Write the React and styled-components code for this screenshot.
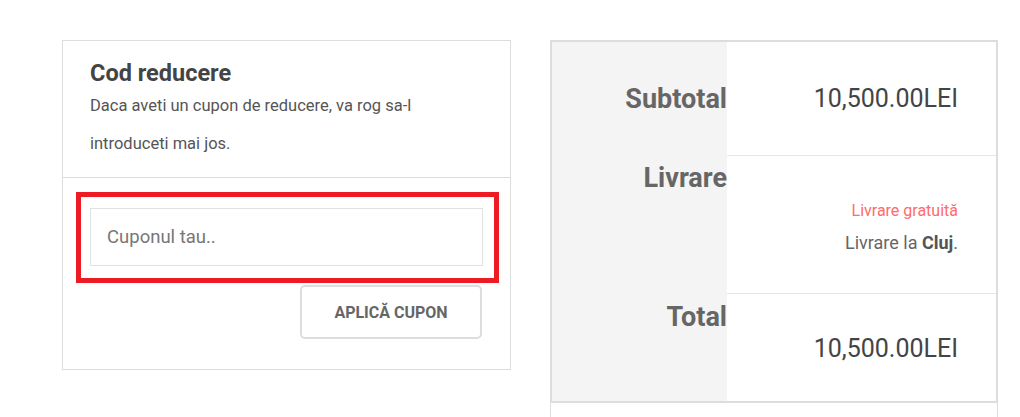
import React, { useState } from "react";
import styled, { createGlobalStyle } from "styled-components";

const GlobalStyle = createGlobalStyle`
  body {
    margin: 0;
    background: #fff;
    font-family: Roboto, "Liberation Sans", Arial, sans-serif;
  }
`;

const App = () => {
  const [coupon, setCoupon] = useState("");

  return (
    <Page>
      <GlobalStyle />
      <CouponCard>
        <CardHeader>
          <Title>Cod reducere</Title>
          <Intro>
            Daca aveti un cupon de reducere, va rog sa-l introduceti mai jos.
          </Intro>
        </CardHeader>
        <CardBody>
          <InputWrap>
            <CouponInput
              placeholder="Cuponul tau.."
              value={coupon}
              onChange={(e) => setCoupon(e.target.value)}
            />
            {/* marcaj rosu peste camp */}
            <Highlight />
          </InputWrap>
          <ApplyButton>APLICĂ CUPON</ApplyButton>
        </CardBody>
      </CouponCard>

      <TotalsColumn>
        <TotalsTable>
          <Row height={113}>
            <Label center>Subtotal</Label>
            <Value center>
              <Amount>10,500.00LEI</Amount>
            </Value>
          </Row>
          <Row height={138}>
            <Label pad={7}>Livrare</Label>
            <Value divider pad={43}>
              <FreeShipping>Livrare gratuită</FreeShipping>
              <ShippingTo>
                Livrare la <strong>Cluj</strong>.
              </ShippingTo>
            </Value>
          </Row>
          <Row height={108}>
            <Label pad={8}>Total</Label>
            <Value divider pad={40}>
              <Amount>10,500.00LEI</Amount>
            </Value>
          </Row>
        </TotalsTable>
        <NextBlock />
      </TotalsColumn>
    </Page>
  );
};

const Page = styled.div`
  display: flex;
  align-items: flex-start;
  gap: 39px;
  padding: 40px 0 0 62px;
  height: 417px;
  box-sizing: border-box;
  overflow: hidden;
`;

const CouponCard = styled.div`
  width: 449px;
  box-sizing: border-box;
  border: 1px solid #dddddd;
  background: #fff;
`;

const CardHeader = styled.div`
  padding: 18px 27px 14px 27px;
  border-bottom: 1px solid #dddddd;
`;

const Title = styled.h3`
  margin: 0;
  font-size: 23.5px;
  line-height: 28px;
  font-weight: 700;
  color: #444;
`;

const Intro = styled.p`
  margin: 0;
  font-size: 16.5px;
  line-height: 38px;
  color: #555;
`;

const CardBody = styled.div`
  display: flex;
  flex-direction: column;
  align-items: flex-end;
  gap: 19px;
  padding: 30px 27px 30px 27px;
`;

const InputWrap = styled.div`
  position: relative;
  width: 100%;
`;

const CouponInput = styled.input`
  display: block;
  width: 100%;
  height: 58px;
  box-sizing: border-box;
  border: 1px solid #e1e1e1;
  padding: 0 16px;
  font-family: inherit;
  font-size: 18.5px;
  color: #444;
  outline: none;

  &::placeholder {
    color: #777;
  }
`;

const Highlight = styled.div`
  position: absolute;
  top: -16px;
  left: -14px;
  right: -16px;
  bottom: -17px;
  border: 5px solid #ed1c24;
  pointer-events: none;
`;

const ApplyButton = styled.button`
  width: 182px;
  height: 54px;
  margin-right: 1px;
  background: #fff;
  border: 2px solid #dddddd;
  border-radius: 5px;
  font-family: inherit;
  font-size: 16px;
  font-weight: 700;
  color: #666;
  cursor: pointer;

  &:hover {
    background: #f6f6f6;
  }
`;

const TotalsColumn = styled.div`
  width: 448px;
  display: flex;
  flex-direction: column;
`;

const TotalsTable = styled.div`
  border: 2px solid #dddddd;
`;

const Row = styled.div`
  display: grid;
  grid-template-columns: 175px 1fr;
  height: ${(p) => p.height}px;
`;

const Label = styled.div`
  background: #f4f4f4;
  display: flex;
  justify-content: flex-end;
  align-items: ${(p) => (p.center ? "center" : "flex-start")};
  padding-top: ${(p) => p.pad || 0}px;
  box-sizing: border-box;
  font-size: 27px;
  line-height: 32px;
  font-weight: 700;
  color: #666;
`;

const Value = styled.div`
  display: flex;
  flex-direction: column;
  align-items: flex-end;
  justify-content: ${(p) => (p.center ? "center" : "flex-start")};
  padding: ${(p) => p.pad || 0}px 38px 0 0;
  border-top: ${(p) => (p.divider ? "1px solid #e6e6e6" : "none")};
  box-sizing: border-box;
`;

const Amount = styled.div`
  font-size: 25px;
  line-height: 30px;
  color: #444;
`;

const FreeShipping = styled.div`
  font-size: 16px;
  line-height: 24px;
  color: #ff6b6b;
`;

const ShippingTo = styled.div`
  margin-top: 5px;
  font-size: 18px;
  line-height: 30px;
  color: #666;

  strong {
    font-weight: 700;
    color: #555;
  }
`;

const NextBlock = styled.div`
  height: 60px;
  border: 1px solid #dddddd;
  border-top: none;
`;

export default App;
